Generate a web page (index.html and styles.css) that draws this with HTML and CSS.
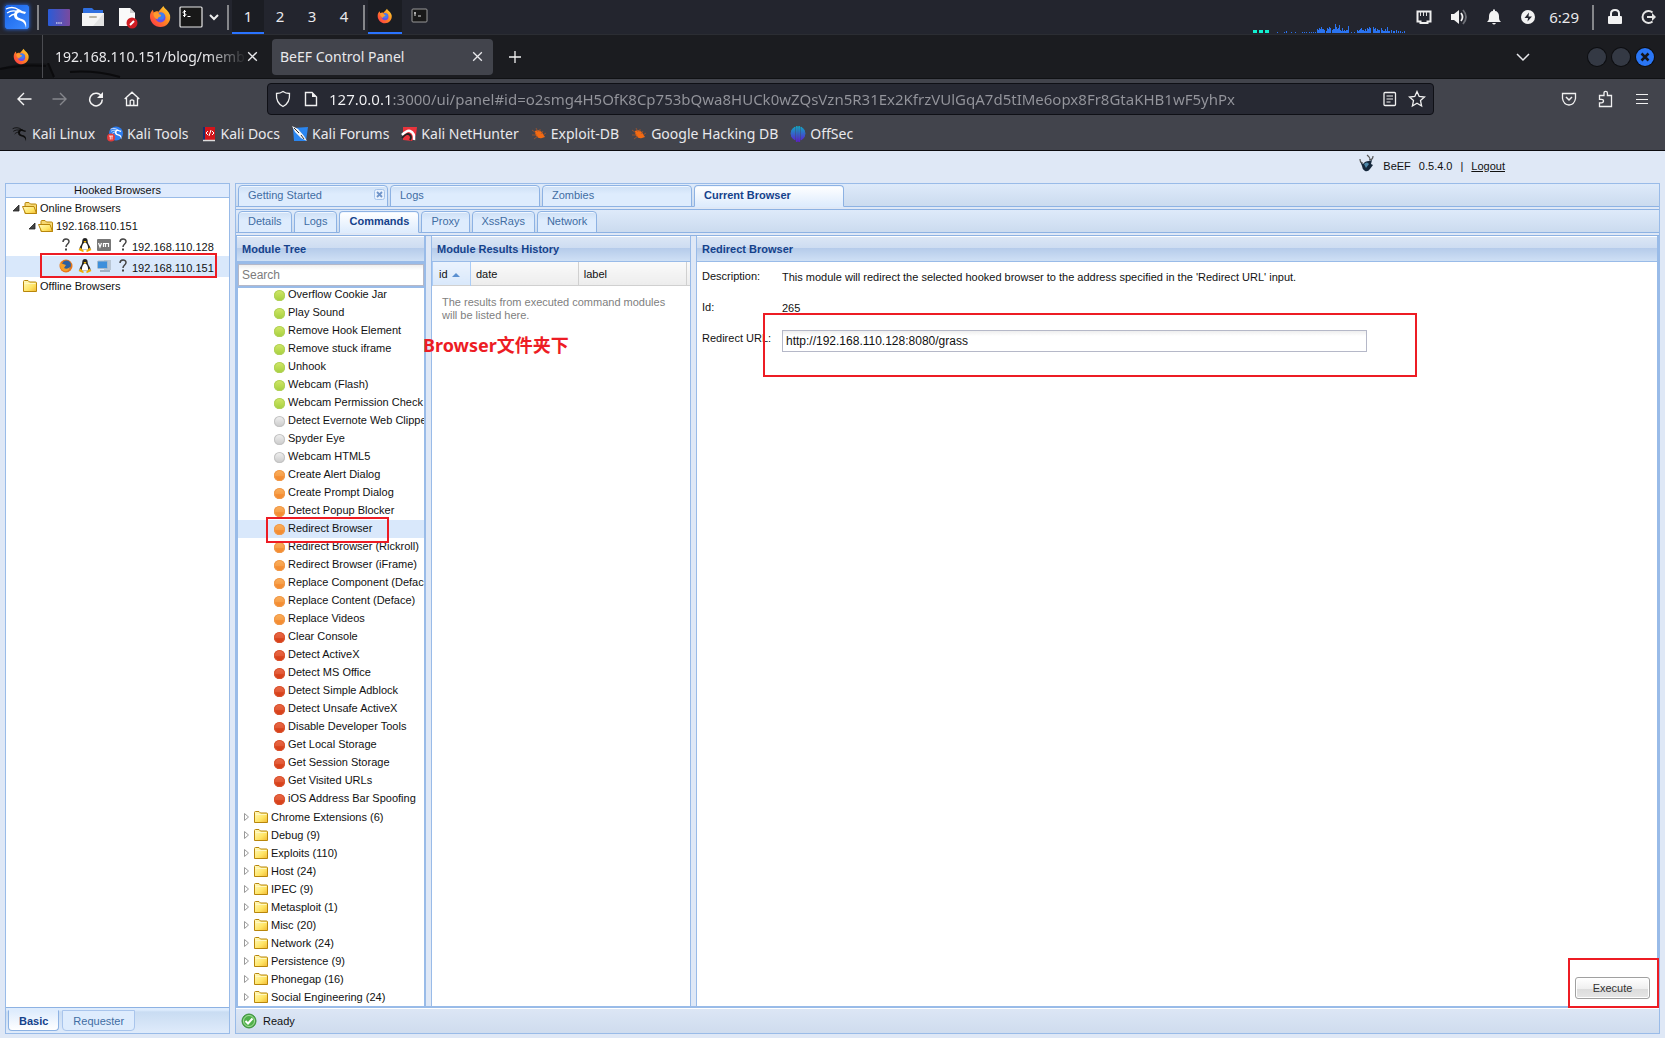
FILE: index.html
```html
<!DOCTYPE html>
<html lang="en">
<head>
<meta charset="utf-8">
<title>BeEF Control Panel</title>
<meta name="viewport" content="width=device-width, initial-scale=1">
<link rel="stylesheet" href="styles.css">
</head>
<body>
<svg class="defs" width="0" height="0" aria-hidden="true">
  <defs>
    <linearGradient id="g-folder" x1="0" y1="0" x2="1" y2="1"><stop offset="0" stop-color="#fffbc4"/><stop offset=".6" stop-color="#ffe566"/><stop offset="1" stop-color="#f2b932"/></linearGradient>
    <linearGradient id="g-fox" x1="1" y1="0" x2="0" y2="1"><stop offset="0" stop-color="#ffe13a"/><stop offset=".45" stop-color="#ff8a1f"/><stop offset="1" stop-color="#ff2b4e"/></linearGradient>
    <linearGradient id="g-desk" x1="0" y1="0" x2="1" y2="0"><stop offset="0" stop-color="#2a5bd7"/><stop offset="1" stop-color="#7a4a9e"/></linearGradient>
    <linearGradient id="g-off" x1="0" y1="0" x2="0" y2="1"><stop offset="0" stop-color="#12a5c4"/><stop offset="1" stop-color="#5a1fd0"/></linearGradient>
    <linearGradient id="g-kali" x1="0" y1="0" x2="1" y2="1"><stop offset="0" stop-color="#1763e8"/><stop offset="1" stop-color="#3d8bff"/></linearGradient>
    <symbol id="i-dragon" viewBox="0 0 24 24">
      <path d="M1 4c4-2 9-2 13 1M2 8c3-2 7-3 11-1M4 12c2-2 4-3 7-3" fill="none" stroke="currentColor" stroke-width="1.3"/>
      <path d="M12 5c2-1 4 0 5 1l4 1-1 2-4-1c-2-1-4 0-4 2 0 3 3 3 5 4 3 1 5 3 4 9-1-4-2-6-5-7-4-1-7-2-7-6 0-2 1-4 3-5z" fill="currentColor"/>
    </symbol>
    <symbol id="i-firefox" viewBox="0 0 24 24">
      <path d="M15 1c1 3 6 5 7 10 1 7-4 12-10 12S1 18 1 12c0-3 1-5 3-7l1 3c1-1 3-2 5-1 1-2 3-3 5-6z" fill="url(#g-fox)"/>
      <circle cx="12" cy="13" r="5.2" fill="#6b4de6"/><circle cx="12.500" cy="11.500" r="3.800" fill="#3f7ff0"/>
      <path d="M5 8c3-1 5 0 6 2 2 0 2 1 1 2-2 1-3 1-3 3-3-1-5-4-4-7z" fill="#ff9a2e"/>
    </symbol>
    <symbol id="i-folder" viewBox="0 0 16 14">
      <path d="M1.500 12.500v-10q0-1 1-1h3.500l1.500 1.500h6q1 0 1 1v8.500z" fill="url(#g-folder)" stroke="#b8860b"/>
      <path d="M2.500 4.500h11" stroke="#fff7c0"/>
    </symbol>
    <symbol id="i-folder-open" viewBox="0 0 16 14">
      <path d="M3 12.500v-10q0-1 1-1h3l1.500 1.500h5q1 0 1 1v8.500z" fill="#f6d873" stroke="#b8860b"/>
      <path d="M.5 5.500h11.500l2.500 7h-11z" fill="url(#g-folder)" stroke="#b8860b"/>
    </symbol>
    <symbol id="i-open" viewBox="0 0 8 8"><path d="M7 1v6H1z" fill="#444" stroke="#222" stroke-width=".8"/></symbol>
    <symbol id="i-closed" viewBox="0 0 8 10"><path d="M1.500 1.500v7l4-3.500z" fill="#fff" stroke="#999"/></symbol>
    <symbol id="i-unknown" viewBox="0 0 16 16">
      <path d="M5 5c0-4 6-4 6-.5 0 2.500-3 2.500-3 5.500" fill="none" stroke="#444" stroke-width="1.500"/><rect x="7" y="11.500" width="2" height="2" fill="#444"/>
    </symbol>
    <symbol id="i-tux" viewBox="0 0 16 16">
      <path d="M8 1c3 0 2.500 3 3 5s3 4 2.500 6.500H2.500C2 10 4.500 8 5 6s0-5 3-5z" fill="#222"/>
      <path d="M8 5.500c2 0 3.500 4 3 7H5c-.5-3 1-7 3-7z" fill="#fff"/><path d="M6.500 4h3L8 6z" fill="#f5b800"/>
      <path d="M1.500 13l2-2.500L7 14l-1 1zM14.500 13l-2-2.500L9 14l1 1z" fill="#f0ad00"/>
    </symbol>
    <symbol id="i-bug" viewBox="0 0 16 16">
      <path d="M4 5c3-2 7 0 8 3l2 3-3 1c-4 1-7-2-7-7z" fill="#f36a12"/>
      <path d="M1 4l4 3M1 9l5 0M5 2l2 4M9 3l0 3M3 13l4-3M12 5l-2 3M15 7l-3 2" stroke="#a8562a" stroke-width=".8" fill="none"/>
    </symbol>
    <symbol id="i-term" viewBox="0 0 24 22">
      <rect x="1" y="1" width="22" height="20" rx="1" fill="#181818" stroke="#e8e8e8" stroke-width="1.200"/>
      <path d="M7 5.500c-3-1-4 1.500-1.500 2s1.500 3-1.500 2M5.500 4v7M8.500 10.500h3" stroke="#fff" fill="none"/>
    </symbol>
    <symbol id="i-x" viewBox="0 0 12 12"><path d="M2 2l8 8M10 2l-8 8" stroke="currentColor" stroke-width="1.200" fill="none"/></symbol>
    <symbol id="i-chevron" viewBox="0 0 14 10"><path d="M1 2l6 6 6-6" stroke="currentColor" stroke-width="1.500" fill="none"/></symbol>
  </defs>
</svg>

<header class="taskbar">
  <button class="launcher" aria-label="Applications"><svg width="24" height="24" class="kali"><rect width="24" height="24" rx="2" fill="url(#g-kali)"/><use href="#i-dragon" width="24" height="24"/></svg></button>
  <span class="divider"></span>
  <div class="shortcuts">
    <button aria-label="Show desktop"><svg width="24" height="24"><rect x="1" y="4" width="22" height="17" rx="1" fill="url(#g-desk)"/><path d="M9 18h6" stroke="#fff" stroke-width="1.200" stroke-dasharray="1.500 .700"/></svg></button>
    <button aria-label="Files"><svg width="24" height="24"><path d="M2 4q0-1 1-1h8l2 2h9v6H2z" fill="#2f6fe0"/><path d="M1 8h22v13H1z" fill="#f4f4f4"/><path d="M23 8v13H12z" fill="#e2e2e2"/><rect x="8" y="11" width="8" height="2" rx="1" fill="#b9b4a4"/></svg></button>
    <button aria-label="Text editor"><svg width="24" height="24"><path d="M4 3h11l5 5v13H4z" fill="#fafafa"/><path d="M15 3v5h5z" fill="#cfcfcf"/><circle cx="17" cy="18" r="5.500" fill="#cf1c22"/><path d="M15 20l4-4" stroke="#fff" stroke-width="2"/></svg></button>
    <button aria-label="Firefox"><svg width="24" height="24"><use href="#i-firefox" width="23" height="23"/></svg></button>
    <button aria-label="Terminal"><svg width="24" height="22"><use href="#i-term" width="24" height="22"/></svg></button>
  </div>
  <button class="more" aria-label="More"><svg width="12" height="9"><path d="M2 2l4 4 4-4" stroke="#eee" stroke-width="2" fill="none"/></svg></button>
  <span class="divider"></span>
  <nav class="workspaces" aria-label="Workspaces">
    <button class="on">1</button><button>2</button><button>3</button><button>4</button>
  </nav>
  <span class="divider"></span>
  <div class="windows">
    <button class="on" aria-label="Firefox window"><svg width="16" height="16"><use href="#i-firefox" width="16" height="16"/></svg></button>
    <button aria-label="Terminal window"><svg width="17" height="16"><rect x="1" y="1" width="15" height="13" rx="1" fill="#181818" stroke="#999"/><path d="M4 4v4M7 8h3M3 5h2" stroke="#ddd"/></svg></button>
  </div>
  <div class="tray">
    <svg class="cpu" width="154" height="12" aria-hidden="true">
      <path d="M0 9.500h4M6 9.500h4M12 9.500h4" stroke="#12f0d0" stroke-width="3"/>
      <path d="M24.500 10v1M31.500 10v1M33.500 9v2M38.500 10v1M42.500 10v1M49.500 10v1M51.500 10v1M53.500 10v1M56.500 10v1M58.500 10v1M60.500 10v1M62.500 10v1M64.500 7v4M65.500 8v3M66.500 6v5M67.500 7v4M68.500 5v6M69.500 7v4M70.500 7v4M71.500 8v3M73.500 9v2M74.500 6v5M75.500 7v4M76.500 5v6M77.500 6v5M79.500 8v3M80.500 7v4M81.500 7v4M82.500 2v9M83.500 5v6M84.500 7v4M85.500 6v5M86.500 3v8M87.500 8v3M88.500 9v2M89.500 6v5M90.500 9v2M91.500 8v3M92.500 9v2M93.500 8v3M94.500 8v3M95.500 4v7M98.500 10v1M101.500 10v1M104.500 8v3M105.500 9v2M106.500 8v3M107.500 7v4M108.500 6v5M109.500 8v3M110.500 8v3M111.500 9v2M112.500 7v4M113.500 9v2M114.500 6v5M115.500 7v4M116.500 5v6M117.500 6v5M120.500 5v6M121.500 7v4M122.500 6v5M123.500 9v2M124.500 7v4M125.500 8v3M126.500 8v3M128.500 6v5M129.500 8v3M130.500 9v2M131.500 9v2M132.500 7v4M133.500 9v2M134.500 5v6M135.500 9v2M136.500 9v2M138.500 8v3M140.500 9v2M141.500 9v2M143.500 8v3M145.500 9v2M147.500 9v2M149.500 10v1M151.500 9v2" stroke="#2a73f0"/>
    </svg>
    <svg width="16" height="16"><path d="M1.500 2.500h13v10h-3v1.500h-7v-1.500h-3z" fill="none" stroke="#eee" stroke-width="2"/><path d="M4.500 3v4M7.500 3v4M10.500 3v4" stroke="#ddd"/></svg>
    <svg width="18" height="18"><path d="M1 6h3l5-4v14l-5-4H1z" fill="#f2f2f2"/><path d="M11 5q3 4 0 8" fill="none" stroke="#f2f2f2" stroke-width="1.800"/><path d="M13 2q6 7 0 14" fill="none" stroke="#6d6f76" stroke-width="1.800"/></svg>
    <svg width="16" height="18"><path d="M1 14c2-2 2-3 2-6 0-3 2-5 4-5V1.500h2V3c2 0 4 2 4 5 0 3 0 4 2 6zM6 15h4q-2 3-4 0z" fill="#f2f2f2"/></svg>
    <svg width="16" height="16"><circle cx="8" cy="8" r="7" fill="#f2f2f2"/><path d="M9 3.500L4.500 9H8l-.5 3.500L12 7.500H8.500z" fill="#23252e"/></svg>
    <time>6:29</time>
    <span class="divider"></span>
    <svg width="16" height="18"><rect x="1" y="8" width="14" height="8" rx="1" fill="#f2f2f2"/><path d="M4 8V5.500q0-3.500 4-3.500t4 3.500V8" fill="none" stroke="#f2f2f2" stroke-width="2"/></svg>
    <svg width="16" height="16"><path d="M11.500 3.500A6 6 0 1 0 11.500 12.500" fill="none" stroke="#e5e5e5" stroke-width="2"/><path d="M6 7h5V4l4 4-4 4V9H6z" fill="#e5e5e5"/></svg>
  </div>
</header>

<section class="tabstrip">
  <svg class="wallpaper" width="130" height="15" aria-hidden="true"><path d="M0 5q30-8 48-4l6 14H0z" fill="#141518"/><path d="M0 6q24-5 46-3M48 0l6 14M70 9q24-2 50 5" stroke="#0b0b0d" stroke-width="2" fill="none"/></svg>
  <span class="pinned"><svg width="17" height="17"><use href="#i-firefox" width="17" height="17"/></svg></span>
  <div class="btab"><span class="btab-name fade">192.168.110.151/blog/members</span><button aria-label="Close tab"><svg width="13" height="13"><use href="#i-x"/></svg></button></div>
  <div class="btab current"><span class="btab-name">BeEF Control Panel</span><button aria-label="Close tab"><svg width="13" height="13"><use href="#i-x"/></svg></button></div>
  <button class="newtab" aria-label="New tab"><svg width="14" height="14"><path d="M7 1v12M1 7h12" stroke="#f2f2f2" stroke-width="1.300"/></svg></button>
  <button class="alltabs" aria-label="List all tabs"><svg width="14" height="10"><use href="#i-chevron"/></svg></button>
  <div class="wincontrols">
    <button aria-label="Minimize"></button><button aria-label="Maximize"></button><button class="close" aria-label="Close"><svg width="12" height="12"><path d="M2.500 2.500l7 7M9.500 2.500l-7 7" stroke="#14151a" stroke-width="2.500"/></svg></button>
  </div>
</section>

<section class="toolbar">
  <div class="navbuttons">
    <button aria-label="Back"><svg width="16" height="16"><path d="M15.500 8H2M8 2L2 8l6 6" fill="none" stroke="#f4f4f4" stroke-width="1.400"/></svg></button>
    <button aria-label="Forward"><svg width="16" height="16"><path d="M.5 8H14M8 2l6 6-6 6" fill="none" stroke="#85868c" stroke-width="1.400"/></svg></button>
    <button aria-label="Reload"><svg width="16" height="16"><path d="M13.500 5.500A6.300 6.300 0 1 0 14.300 8.500" fill="none" stroke="#f4f4f4" stroke-width="1.500"/><path d="M15 1v6H9z" fill="#f4f4f4"/></svg></button>
    <button aria-label="Home"><svg width="16" height="16"><path d="M.7 8L8 1.200 15.300 8M2.500 7v7.500h11V7M6.200 14.500v-4.700q1.800-1.800 3.600 0v4.700" fill="none" stroke="#f4f4f4" stroke-width="1.300"/></svg></button>
  </div>
  <div class="urlbar">
    <svg width="16" height="18"><path d="M8 1.500c2 1.500 4 2 6.500 2C15 10 12 14.500 8 16.500 4 14.500 1 10 1.500 3.500 4 3.500 6 3 8 1.500z" fill="none" stroke="#f0f0f0" stroke-width="1.300"/></svg>
    <svg width="14" height="16"><path d="M1.500 1.500h6.500l4.500 4.500v8.500h-11z" fill="none" stroke="#f0f0f0" stroke-width="1.400"/><path d="M8 1.500v4.500h4.500z" fill="#f0f0f0"/></svg>
    <input class="url" type="text" aria-label="Address" value="127.0.0.1:3000/ui/panel#id=o2smg4H5OfK8Cp753bQwa8HUCk0wZQsVzn5R31Ex2KfrzVUlGqA7d5tIMe6opx8Fr8GtaKHB1wF5yhPx">
    <svg width="14" height="16"><rect x="1" y="1.500" width="11.500" height="13" rx="1" fill="none" stroke="#f0f0f0" stroke-width="1.300"/><path d="M3.500 5h6.500M3.500 8h6.500M3.500 11h4" stroke="#f0f0f0"/></svg>
    <svg width="18" height="18"><path d="M9 1.500l2.200 4.900 5.300.6-4 3.600 1.100 5.400L9 13.300 4.400 16l1.100-5.400-4-3.600 5.300-.6z" fill="none" stroke="#f0f0f0" stroke-width="1.300"/></svg>
  </div>
  <div class="actions">
    <button aria-label="Pocket"><svg width="16" height="16"><path d="M1.500 2.500h13v5q-1 6-6.500 6.500Q2.500 13.500 1.500 7.500z" fill="none" stroke="#f0f0f0" stroke-width="1.300"/><path d="M5 6l3 3 3-3" fill="none" stroke="#f0f0f0" stroke-width="1.500"/></svg></button>
    <button aria-label="Extensions"><svg width="16" height="18"><path d="M1.500 5.500h4.500V3q0-1.700 1.700-1.700T9.400 3v2.500h4.100v11h-12v-3.700h2q2 0 2-1.700t-2-1.700h-2z" fill="none" stroke="#f0f0f0" stroke-width="1.300"/></svg></button>
    <button aria-label="Menu"><svg width="14" height="14"><path d="M1 2.500h12M1 7.500h12M1 11.500h12" stroke="#f0f0f0" stroke-width="1.200"/></svg></button>
  </div>
</section>

<nav class="bookmarks" aria-label="Bookmarks">
  <a href="#"><svg width="16" height="16" class="ink"><use href="#i-dragon"/></svg>Kali Linux</a>
  <a href="#"><svg width="16" height="16" class="pale"><circle cx="9" cy="7.500" r="7" fill="#2d7df0"/><use href="#i-dragon" x="3" y="1" width="13" height="13"/><circle cx="4" cy="11.500" r="4" fill="#e23b3b"/><path d="M2 10h4M3.300 10v3.500M5 10v3.500" stroke="#fff" stroke-width=".8"/></svg>Kali Tools</a>
  <a href="#"><svg width="16" height="16"><rect x="2" y="1" width="12" height="13" fill="#d4151b"/><path d="M2 1h2v13H2z" fill="#16306e"/><path d="M2 14.500h12" stroke="#ddd" stroke-width="1.500"/><path d="M7 5l-2 2 2 2M11 5l2 2-2 2M10 4L8 10" fill="none" stroke="#fff"/></svg>Kali Docs</a>
  <a href="#"><svg width="16" height="16"><path d="M1 2l15-1-2 14H2z" fill="#2a86f0"/><path d="M0 0l6 3 6 7 3 5-6-3-6-6z" fill="#f4f4f4"/><path d="M2 2l5 5M9 9l3 4" stroke="#333"/></svg>Kali Forums</a>
  <a href="#"><svg width="16" height="16"><path d="M2 1h14l-1 8-4 6-9-1z" fill="#e8343c"/><path d="M1 9q5-5 8-4 5 2 4 9" fill="none" stroke="#fff" stroke-width="2.500"/><path d="M1 12q5-6 8-3 2 2 0 5" fill="none" stroke="#222" stroke-width="1.800"/></svg>Kali NetHunter</a>
  <a href="#"><svg width="16" height="16"><use href="#i-bug"/></svg>Exploit-DB</a>
  <a href="#"><svg width="16" height="16"><use href="#i-bug"/></svg>Google Hacking DB</a>
  <a href="#"><svg width="16" height="16"><path d="M5 1v13Q1 12 1 7.500T5 1zM11 1v13q4-2 4-6.500T11 1zM6.300.5h1v15h-1zM8.700.5h1v15h-1z" fill="url(#g-off)" stroke="url(#g-off)"/></svg>OffSec</a>
</nav>

<main class="beef">
  <div class="beef-top">
    <svg width="16" height="18" aria-hidden="true"><path d="M1 7l3 3q2-3 6-3l3-1-1 4 2 1-3 4q-2 3-5 2-3-2-3-5z" fill="#16283c"/><path d="M5 10q3-3 5 0l-3 4z" fill="#4d86a8"/><path d="M1 5q0 4 3 4M8 1q3 2 3 5M10 6q4 0 4-4" fill="none" stroke="#555" stroke-width="1.200"/></svg>
    <span>BeEF</span><span>0.5.4.0</span><span>|</span><a href="#">Logout</a>
  </div>

  <div class="columns">
    <aside class="hooked">
      <h2>Hooked Browsers</h2>
      <ul class="hooks">
        <li class="row"><svg width="8" height="8"><use href="#i-open"/></svg><svg width="16" height="14"><use href="#i-folder-open"/></svg><span>Online Browsers</span></li>
        <li class="row sub"><svg width="8" height="8"><use href="#i-open"/></svg><svg width="16" height="14"><use href="#i-folder-open"/></svg><span>192.168.110.151</span></li>
        <li class="row host"><svg width="16" height="16"><use href="#i-unknown"/></svg><svg width="16" height="16"><use href="#i-tux"/></svg><svg width="16" height="16"><rect x="1" y="2" width="14" height="12" rx="1" fill="#777"/><path d="M2.500 6l1.500 4 1.500-4M7.500 10V6.500h2V10M9.500 6.500h3V10" fill="none" stroke="#fff" stroke-width="1.200"/></svg><svg width="16" height="16"><use href="#i-unknown"/></svg><span>192.168.110.128</span></li>
        <li class="row host picked"><svg width="16" height="16"><circle cx="8" cy="8" r="6.500" fill="#e6761a"/><circle cx="8.500" cy="7" r="4.500" fill="#2d5f9e"/><path d="M2 4q1 2 3 2l3 1-2 3q3 2 6-1-1 5-6 4-5-2-4-9z" fill="#f5a02a"/></svg><svg width="16" height="16"><use href="#i-tux"/></svg><svg width="16" height="16"><rect x="8" y="2" width="7" height="10" fill="#b9c6d4"/><rect x="1.500" y="3" width="10" height="7.500" rx="1" fill="#3d8fdb" stroke="#a9bccd"/><path d="M4 13h10" stroke="#9fb3c6" stroke-width="2"/></svg><svg width="16" height="16"><use href="#i-unknown"/></svg><span>192.168.110.151</span><i class="mark mark-host"></i></li>
        <li class="row"><svg width="8" height="8"></svg><svg width="16" height="14"><use href="#i-folder"/></svg><span>Offline Browsers</span></li>
      </ul>
      <div class="bottomtabs"><button class="on">Basic</button><button>Requester</button></div>
    </aside>

    <section class="panel">
      <div class="tabs wide">
        <button class="closable">Getting Started<svg width="11" height="11"><rect x=".5" y=".5" width="10" height="10" rx="2" fill="#e8f1fd" stroke="#a5c3ea"/><path d="M3 3l5 5M8 3L3 8" stroke="#6f94c9" stroke-width="1.800"/></svg></button>
        <button>Logs</button><button>Zombies</button><button class="on">Current Browser</button>
      </div>
      <div class="tabs inner">
        <button>Details</button><button>Logs</button><button class="on">Commands</button><button>Proxy</button><button>XssRays</button><button>Network</button>
      </div>
      <div class="work">
        <section class="modules">
          <h3>Module Tree</h3>
          <div class="searchbox"><input type="text" placeholder="Search" aria-label="Search modules"></div>
          <div class="treeview"><ul>
            <li class="leaf green">Overflow Cookie Jar</li>
            <li class="leaf green">Play Sound</li>
            <li class="leaf green">Remove Hook Element</li>
            <li class="leaf green">Remove stuck iframe</li>
            <li class="leaf green">Unhook</li>
            <li class="leaf green">Webcam (Flash)</li>
            <li class="leaf green">Webcam Permission Check</li>
            <li class="leaf grey">Detect Evernote Web Clipper</li>
            <li class="leaf grey">Spyder Eye</li>
            <li class="leaf grey">Webcam HTML5</li>
            <li class="leaf orange">Create Alert Dialog</li>
            <li class="leaf orange">Create Prompt Dialog</li>
            <li class="leaf orange">Detect Popup Blocker</li>
            <li class="leaf orange picked">Redirect Browser<i class="mark mark-module"></i></li>
            <li class="leaf orange">Redirect Browser (Rickroll)</li>
            <li class="leaf orange">Redirect Browser (iFrame)</li>
            <li class="leaf orange">Replace Component (Deface)</li>
            <li class="leaf orange">Replace Content (Deface)</li>
            <li class="leaf orange">Replace Videos</li>
            <li class="leaf red">Clear Console</li>
            <li class="leaf red">Detect ActiveX</li>
            <li class="leaf red">Detect MS Office</li>
            <li class="leaf red">Detect Simple Adblock</li>
            <li class="leaf red">Detect Unsafe ActiveX</li>
            <li class="leaf red">Disable Developer Tools</li>
            <li class="leaf red">Get Local Storage</li>
            <li class="leaf red">Get Session Storage</li>
            <li class="leaf red">Get Visited URLs</li>
            <li class="leaf red">iOS Address Bar Spoofing</li>
            <li class="group"><svg width="8" height="10"><use href="#i-closed"/></svg><svg width="16" height="14"><use href="#i-folder"/></svg>Chrome Extensions (6)</li>
            <li class="group"><svg width="8" height="10"><use href="#i-closed"/></svg><svg width="16" height="14"><use href="#i-folder"/></svg>Debug (9)</li>
            <li class="group"><svg width="8" height="10"><use href="#i-closed"/></svg><svg width="16" height="14"><use href="#i-folder"/></svg>Exploits (110)</li>
            <li class="group"><svg width="8" height="10"><use href="#i-closed"/></svg><svg width="16" height="14"><use href="#i-folder"/></svg>Host (24)</li>
            <li class="group"><svg width="8" height="10"><use href="#i-closed"/></svg><svg width="16" height="14"><use href="#i-folder"/></svg>IPEC (9)</li>
            <li class="group"><svg width="8" height="10"><use href="#i-closed"/></svg><svg width="16" height="14"><use href="#i-folder"/></svg>Metasploit (1)</li>
            <li class="group"><svg width="8" height="10"><use href="#i-closed"/></svg><svg width="16" height="14"><use href="#i-folder"/></svg>Misc (20)</li>
            <li class="group"><svg width="8" height="10"><use href="#i-closed"/></svg><svg width="16" height="14"><use href="#i-folder"/></svg>Network (24)</li>
            <li class="group"><svg width="8" height="10"><use href="#i-closed"/></svg><svg width="16" height="14"><use href="#i-folder"/></svg>Persistence (9)</li>
            <li class="group"><svg width="8" height="10"><use href="#i-closed"/></svg><svg width="16" height="14"><use href="#i-folder"/></svg>Phonegap (16)</li>
            <li class="group"><svg width="8" height="10"><use href="#i-closed"/></svg><svg width="16" height="14"><use href="#i-folder"/></svg>Social Engineering (24)</li>
          </ul></div>
        </section>

        <section class="history">
          <h3>Module Results History</h3>
          <table>
            <thead><tr><th class="c-id sorted">id <svg width="8" height="5"><path d="M0 5l4-4 4 4z" fill="#5a8fd0"/></svg></th><th>date</th><th>label</th><th class="c-end"></th></tr></thead>
          </table>
          <p>The results from executed command modules will be listed here.</p>
          <strong class="note">Browser文件夹下</strong>
        </section>

        <section class="command">
          <h3>Redirect Browser</h3>
          <form onsubmit="return false">
            <div class="field"><span class="name">Description:</span><span class="value">This module will redirect the selected hooked browser to the address specified in the 'Redirect URL' input.</span></div>
            <div class="field"><span class="name">Id:</span><span class="value">265</span></div>
            <div class="field"><label class="name" for="redirect">Redirect URL:</label><span class="entry"><input id="redirect" type="text" value="http://192.168.110.128:8080/grass"><i class="mark mark-url"></i></span></div>
            <div class="submit"><button type="submit">Execute</button><i class="mark mark-run"></i></div>
          </form>
        </section>
      </div>
      <footer class="status"><svg width="16" height="16"><circle cx="8" cy="8" r="7" fill="#4fb04a" stroke="#3a8f3a"/><circle cx="8" cy="8" r="5.500" fill="none" stroke="#a7dc9c"/><path d="M4.500 8l2.500 2.500 4.500-5" fill="none" stroke="#fff" stroke-width="2"/></svg>Ready</footer>
    </section>
  </div>
</main>
</body>
</html>
```
FILE: styles.css
```css
* { box-sizing: border-box; }
body {
  margin: 0;
  min-height: 100vh;
  display: flex;
  flex-direction: column;
  background: #dfe8f6;
  font: 11px/14px "Liberation Sans", Arial, sans-serif;
  color: #111;
}
button, input { font: inherit; color: inherit; }
button { border: 0; padding: 0; background: none; }
ul { list-style: none; margin: 0; padding: 0; }
svg { flex: none; display: block; }
.defs { position: absolute; }

/* desktop panel */
.taskbar, .tabstrip, .toolbar, .bookmarks { font: 14px/20px "Noto Sans", sans-serif; color: #e9e9ec; }
.taskbar {
  height: 35px;
  display: flex;
  align-items: center;
  padding: 0 8px 0 5px;
  background: #23252e;
  border-bottom: 1px solid #2b2d33;
}
.kali { color: #fff; box-shadow: 0 0 4px #2a73ff; }
.divider { width: 2px; height: 25px; background: #85868a; flex: none; }
.launcher { margin-right: 8px; }
.shortcuts { display: flex; align-items: center; gap: 10px; margin-left: 8px; }
.shortcuts button:last-child { margin-left: -4px; }
.more { margin: 0 7px 0 5px; }
.workspaces, .windows { display: flex; align-self: stretch; }
.workspaces { margin-left: 3px; margin-right: 3px; }
.workspaces button { width: 32px; border-bottom: 2px solid transparent; font-size: 15px; }
.windows { margin-left: 3px; }
.windows button { width: 34px; border-bottom: 2px solid transparent; display: flex; align-items: center; justify-content: center; }
.workspaces .on, .windows .on { background: #1b1d23; border-color: #2a73ff; }
.tray { margin-left: auto; display: flex; align-items: center; align-self: stretch; gap: 18px; }
.tray time { font-size: 15px; margin: 0 -5px; }
.tray .cpu { align-self: flex-end; margin-right: -9px; }
.tray .divider { margin-right: -5px; }

/* browser window */
.tabstrip {
  height: 44px;
  display: flex;
  align-items: center;
  padding: 0 11px 0 0;
  background: #1b1c20;
  border-bottom: 1px solid #101114;
  position: relative;
}
.wallpaper { position: absolute; left: 0; bottom: 0; }
.pinned { width: 43px; align-self: stretch; display: flex; align-items: center; justify-content: center; border-right: 1px solid #4b4c51; position: relative; }
.btab { width: 221px; height: 36px; display: flex; align-items: center; padding: 0 9px 0 8px; border-radius: 4px; }
.btab + .btab { margin-left: 4px; }
.btab:not(.current) { width: 225px; padding-left: 12px; }
.btab-name { flex: 1; overflow: hidden; white-space: nowrap; }
.fade { -webkit-mask-image: linear-gradient(to right, #000 80%, transparent); mask-image: linear-gradient(to right, #000 80%, transparent); }
.current { background: #42444c; }
.newtab { margin-left: 15px; }
.alltabs { margin-left: auto; margin-right: 58px; }
.wincontrols { display: flex; gap: 6px; }
.wincontrols button { width: 18px; height: 18px; border-radius: 50%; background: #343944; box-shadow: 0 0 0 1px #0d0e11; display: flex; align-items: center; justify-content: center; }
.wincontrols .close { background: #2a76f5; }
.toolbar { height: 40px; display: flex; align-items: center; background: #42444c; padding: 0 16px; }
.navbuttons { display: flex; gap: 20px; width: 251px; flex: none; }
.urlbar { flex: 1; height: 32px; display: flex; align-items: center; padding: 0 7px; background: #272933; border: 1px solid #0f1016; border-radius: 4px; }
.urlbar svg + svg { margin-left: 13px; }
.urlbar input + svg + svg { margin-left: 11px; }
.url {
  flex: 1;
  min-width: 0;
  border: 0;
  padding: 0;
  margin: 0 12px 0 11px;
  outline: 0;
  font-size: 15px;
  background: linear-gradient(to right, #f5f5f7 64px, #94959c 64px);
  -webkit-background-clip: text;
  background-clip: text;
  color: transparent;
}
.actions { display: flex; align-items: center; gap: 21px; margin-left: 127px; }
.bookmarks { height: 32px; display: flex; align-items: center; gap: 12px; padding: 0 12px 2px; background: #42444c; border-bottom: 1px solid #0c0c10; }
.bookmarks a { display: flex; align-items: center; gap: 4px; color: inherit; text-decoration: none; white-space: nowrap; }
.ink { color: #0c0c0c; }
.pale { color: #fff; }

/* control panel page */
.beef { flex: 1; display: flex; flex-direction: column; padding: 0 5px 5px; }
.beef-top { height: 32px; display: flex; justify-content: flex-end; align-items: center; gap: 8px; padding: 0 155px 2px 0; }
.beef-top svg { align-self: flex-start; margin-top: 3px; }
.beef-top a { color: #111; }
.columns { flex: 1; display: grid; grid-template-columns: 225px minmax(0, 1fr); gap: 5px; }
.hooked, .panel { display: flex; flex-direction: column; border: 1px solid #99bbe8; background: #fff; }
.hooked h2 { margin: 0; height: 14px; font: inherit; text-align: center; background: #dfebfd; border-bottom: 1px solid #99bbe8; line-height: 13px; }
.hooks { flex: 1; padding-top: 1px; }
.row { height: 18px; display: flex; align-items: center; gap: 2px; padding: 0 0 1px 6px; white-space: nowrap; }
.row.sub { padding-left: 22px; }
.row.host { height: 21px; padding-left: 52px; gap: 3px; position: relative; }
.row.host span { margin-left: -2px; padding-top: 3px; }
.picked { background: #d9e8fb; position: relative; }
.bottomtabs { height: 26px; display: flex; gap: 3px; padding: 0 2px 2px; border-top: 1px solid #8db2e3; background: linear-gradient(#deecfd 0 2px, #c9dcf2 4px, #dfebfb); }
.bottomtabs button { padding: 0 10px; margin-top: 2px; border: 1px solid #8db2e3; border-radius: 0 0 4px 4px; background: #deecfd; color: #416da3; }
.bottomtabs button:last-child { border-color: #a9c5ec; }
.bottomtabs .on { border-top-color: #deecfd; font-weight: bold; color: #15428b; background: linear-gradient(#deecfd, #fff); }

.tabs { display: flex; gap: 2px; padding: 1px 2px 0; border-bottom: 1px solid #8db2e3; background: linear-gradient(#deeafa, #cbdbef); height: 23px; }
.tabs.inner { height: 24px; border-top: 1px solid #8db2e3; }
.wide { margin-bottom: 2px; }
.panel { background: #dfe8f6; }
.tabs button {
  margin-bottom: -1px;
  border: 1px solid #8db2e3;
  border-radius: 4px 4px 0 0;
  padding: 0 9px 2px;
  background: linear-gradient(#cddff5, #deecfd 40%);
  box-shadow: inset 0 1px #eff6ff;
  color: #416da3;
  text-align: left;
}
.tabs.wide button { width: 150px; }
.tabs .closable { display: flex; justify-content: space-between; align-items: center; padding-right: 2px; }
.closable svg { margin-bottom: 2px; }
.tabs .on { background: linear-gradient(#fff, #deecfd); border-bottom-color: #deecfd; font-weight: bold; color: #15428b; }
.work { flex: 1; display: grid; grid-template-columns: 190px 260px minmax(0, 1fr); gap: 5px; margin-top: 2px; border-top: 1px solid #8db2e3; border-bottom: 2px solid #99bbe8; }
h3 {
  margin: 0;
  height: 26px;
  padding: 5px 5px 0;
  font-size: 11px;
  line-height: 14px;
  color: #15428b;
  border-top: 1px solid #fff;
  border-bottom: 1px solid #99bbe8;
  background: linear-gradient(#dbe6f5, #cddcf1 46%, #b5cbea 46%, #cfe0f5);
}
.modules { display: flex; flex-direction: column; border: solid #99bbe8; border-width: 0 2px 0 1px; min-width: 0; }
.searchbox { background: #99bbe8; padding: 2px 0 0 1px; }
.searchbox input { display: block; width: 100%; height: 22px; border: 1px solid #b5b8c8; padding: 1px 3px; background: linear-gradient(#eee, #fff 5px); font-size: 12px; }
::placeholder { color: #7c7c7c; opacity: 1; }
.treeview { flex: 1; overflow: hidden; background: #fff; border-top: 2px solid #99bbe8; border-left: 1px solid #99bbe8; }
.treeview ul { margin-top: -2px; }
.leaf, .group { height: 18px; display: flex; align-items: center; white-space: nowrap; }
.leaf { padding: 0 0 2px 36px; gap: 3px; }
.leaf::before { content: ""; flex: none; width: 11px; height: 11px; margin-top: 3px; border-radius: 50%; }
.green::before { background: linear-gradient(#d3e86a, #a4cf3c); box-shadow: inset 0 0 0 1px #b1d158; }
.grey::before { background: linear-gradient(#f2f2f2, #c9c9c9); box-shadow: inset 0 0 0 1px #c3c3c3; }
.orange::before { background: linear-gradient(#fbb05c, #f7a04a 50%, #f48f36 60%, #f58a2c); box-shadow: inset 0 0 0 1px #f0994a; }
.red::before { background: linear-gradient(#ea6a48, #e25a36 50%, #d9451f 60%, #d63c14); box-shadow: inset 0 0 0 1px #d9532f; }
.group { padding-left: 5px; gap: 2px; }

.history, .command { background: #fff; border: solid #99bbe8; border-width: 0 1px; position: relative; min-width: 0; }
.history table { width: 100%; height: 24px; table-layout: fixed; border-collapse: collapse; background: linear-gradient(#fafafa, #ececec); border-bottom: 1px solid #d0d0d0; }
.history th { padding: 0 5px; height: 22px; font-weight: normal; text-align: left; border-right: 1px solid #d0d0d0; }
.history .c-id { width: 38px; padding-left: 6px; }
.history .c-end { width: 4px; padding: 0; border: 0; }
.history .sorted { background: linear-gradient(#ebf3fd, #d9e8fb); border-right-color: #aaccf6; border-left: 1px solid #aaccf6; }
.history th svg { display: inline-block; margin: 0 0 1px 1px; }
.history p { margin: 10px 20px 0 10px; line-height: 13px; color: #808080; }
.note { position: absolute; left: -9px; top: 96px; font: bold 18px/26px "Noto Sans", "Noto Sans CJK SC", sans-serif; color: #ed1c24; white-space: nowrap; z-index: 2; }

.command { display: flex; flex-direction: column; border-right-width: 2px; }
.command form { flex: 1; display: flex; flex-direction: column; padding: 6px 7px 7px 5px; }
.field { display: flex; height: 31px; line-height: 16px; }
.name { width: 80px; flex: none; }
.value { padding-top: 1px; }
.entry { position: relative; flex: 0 1 585px; height: 22px; }
.entry input { display: block; width: 100%; height: 22px; padding: 1px 3px; border: 1px solid #b5b8c8; background: linear-gradient(#eee, #fff 5px); font-size: 12px; }
.submit { margin-top: auto; align-self: flex-end; position: relative; }
.submit button { display: block; width: 75px; height: 22px; border: 1px solid #a0a0a0; border-radius: 3px; box-shadow: inset 0 0 0 1px #fff; background: linear-gradient(#fff, #efefef 55%, #dcdcdc 55%, #e6e6e6); color: #333; }
.status { height: 25px; display: flex; align-items: center; gap: 6px; padding: 0 5px; border-top: 1px solid #fff; background: linear-gradient(#dce6f5, #cfdcee); }

/* red call-out frames */
.mark { position: absolute; border: 2px solid #ed1c24; z-index: 3; pointer-events: none; }
.mark-host { left: 34px; width: 177px; top: -3px; height: 25px; }
.mark-module { left: 28px; width: 123px; top: -3px; height: 26px; }
.mark-url { left: -19px; right: -50px; top: -17px; height: 64px; }
.mark-run { left: -7px; right: -9px; top: -19px; bottom: -9px; }
```
